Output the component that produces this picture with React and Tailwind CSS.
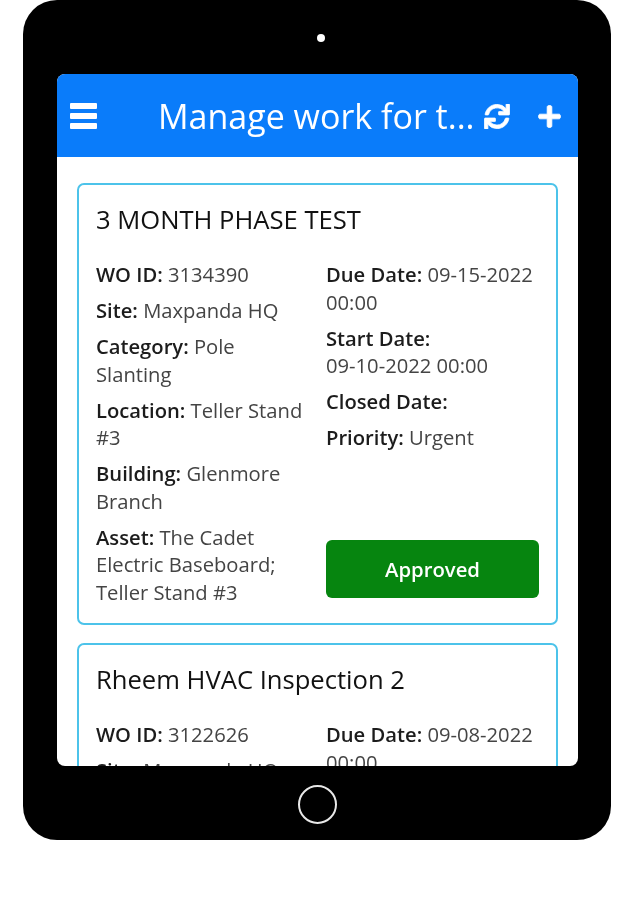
import React from "react";
import { FaSync, FaPlus } from "react-icons/fa";

const F = ({ k, v, wrap }) => (
  <p className="m-0 text-[20.2px] leading-[27.5px] text-[#444444]">
    <span className="font-semibold text-[#1c1c1c]">{k}:</span>
    {wrap ? <br /> : v ? " " : ""}
    {v}
  </p>
);

const Card = ({ title, left, right, button }) => (
  <div className="border-2 border-[#4cc3ea] rounded-[7px] px-[17px] pt-[17px] pb-[17px] bg-white">
    <h2 className="m-0 text-[25.6px] leading-[36px] font-normal text-[#111111]">{title}</h2>
    <div className="flex mt-[23px]">
      <div className="w-[230px] shrink-0 flex flex-col gap-[8.5px] pr-[18px]">
        {left.map(([k, v]) => <F key={k} k={k} v={v} />)}
      </div>
      <div className="flex-1 flex flex-col">
        <div className="flex flex-col gap-[8.5px]">
          {right.map(([k, v, wrap]) => <F key={k} k={k} v={v} wrap={wrap} />)}
        </div>
        {button && (
          <div className="mt-auto mb-[8px] h-[58px] rounded-[6px] bg-[#06850f] flex items-center justify-center text-white font-semibold text-[20.3px]">
            {button}
          </div>
        )}
      </div>
    </div>
  </div>
);

export default function App() {
  return (
    <div className="w-[633px] h-[900px] bg-white overflow-hidden blur-[0.4px]" style={{ fontFamily: '"Open Sans", sans-serif' }}>
      <div className="ml-[23px] w-[588px] h-[840px] bg-black rounded-[34px] flex flex-col items-center">
        <div className="h-[74px] w-full flex items-start justify-center pl-[8px] pt-[34px]">
          <div className="w-[8px] h-[8px] rounded-full bg-white" />
        </div>
        <div className="w-[521px] ml-[1px] h-[692px] bg-white rounded-[8px] overflow-hidden flex flex-col">
          <header className="h-[83px] shrink-0 bg-[#0a7cfa] text-white flex items-center pl-[13px] pr-[16px]">
            <svg viewBox="0 0 27 26" className="w-[27px] h-[26px] shrink-0" fill="currentColor">
              <rect x="0" y="0" width="27" height="6" rx="1" />
              <rect x="0" y="10" width="27" height="6" rx="1" />
              <rect x="0" y="20" width="27" height="6" rx="1" />
            </svg>
            <div className="ml-[61px] w-[315px] shrink-0 text-[34px] leading-[44px] whitespace-nowrap">Manage work for t...</div>
            <FaSync className="ml-[11px] w-[26px] h-[25px] shrink-0 mt-[2px]" stroke="currentColor" strokeWidth="16" />
            <FaPlus className="ml-[27px] w-[25px] h-[25px] shrink-0 mt-[2px]" stroke="currentColor" strokeWidth="16" />
          </header>
          <main className="px-[20px] pt-[26px] flex flex-col gap-[18px]">
            <Card
              title="3 MONTH PHASE TEST"
              left={[
                ["WO ID", "3134390"],
                ["Site", "Maxpanda HQ"],
                ["Category", "Pole Slanting"],
                ["Location", "Teller Stand #3"],
                ["Building", "Glenmore Branch"],
                ["Asset", "The Cadet Electric Baseboard; Teller Stand #3"],
              ]}
              right={[
                ["Due Date", "09-15-2022 00:00"],
                ["Start Date", "09-10-2022 00:00", true],
                ["Closed Date", ""],
                ["Priority", "Urgent"],
              ]}
              button="Approved"
            />
            <Card
              title="Rheem HVAC Inspection 2"
              left={[
                ["WO ID", "3122626"],
                ["Site", "Maxpanda HQ"],
              ]}
              right={[["Due Date", "09-08-2022 00:00"]]}
            />
          </main>
        </div>
        <div className="flex-1 w-full flex items-center justify-center pt-[2px]">
          <div className="w-[39px] h-[39px] rounded-full border-2 border-[#e8e8e8]" />
        </div>
      </div>
    </div>
  );
}
